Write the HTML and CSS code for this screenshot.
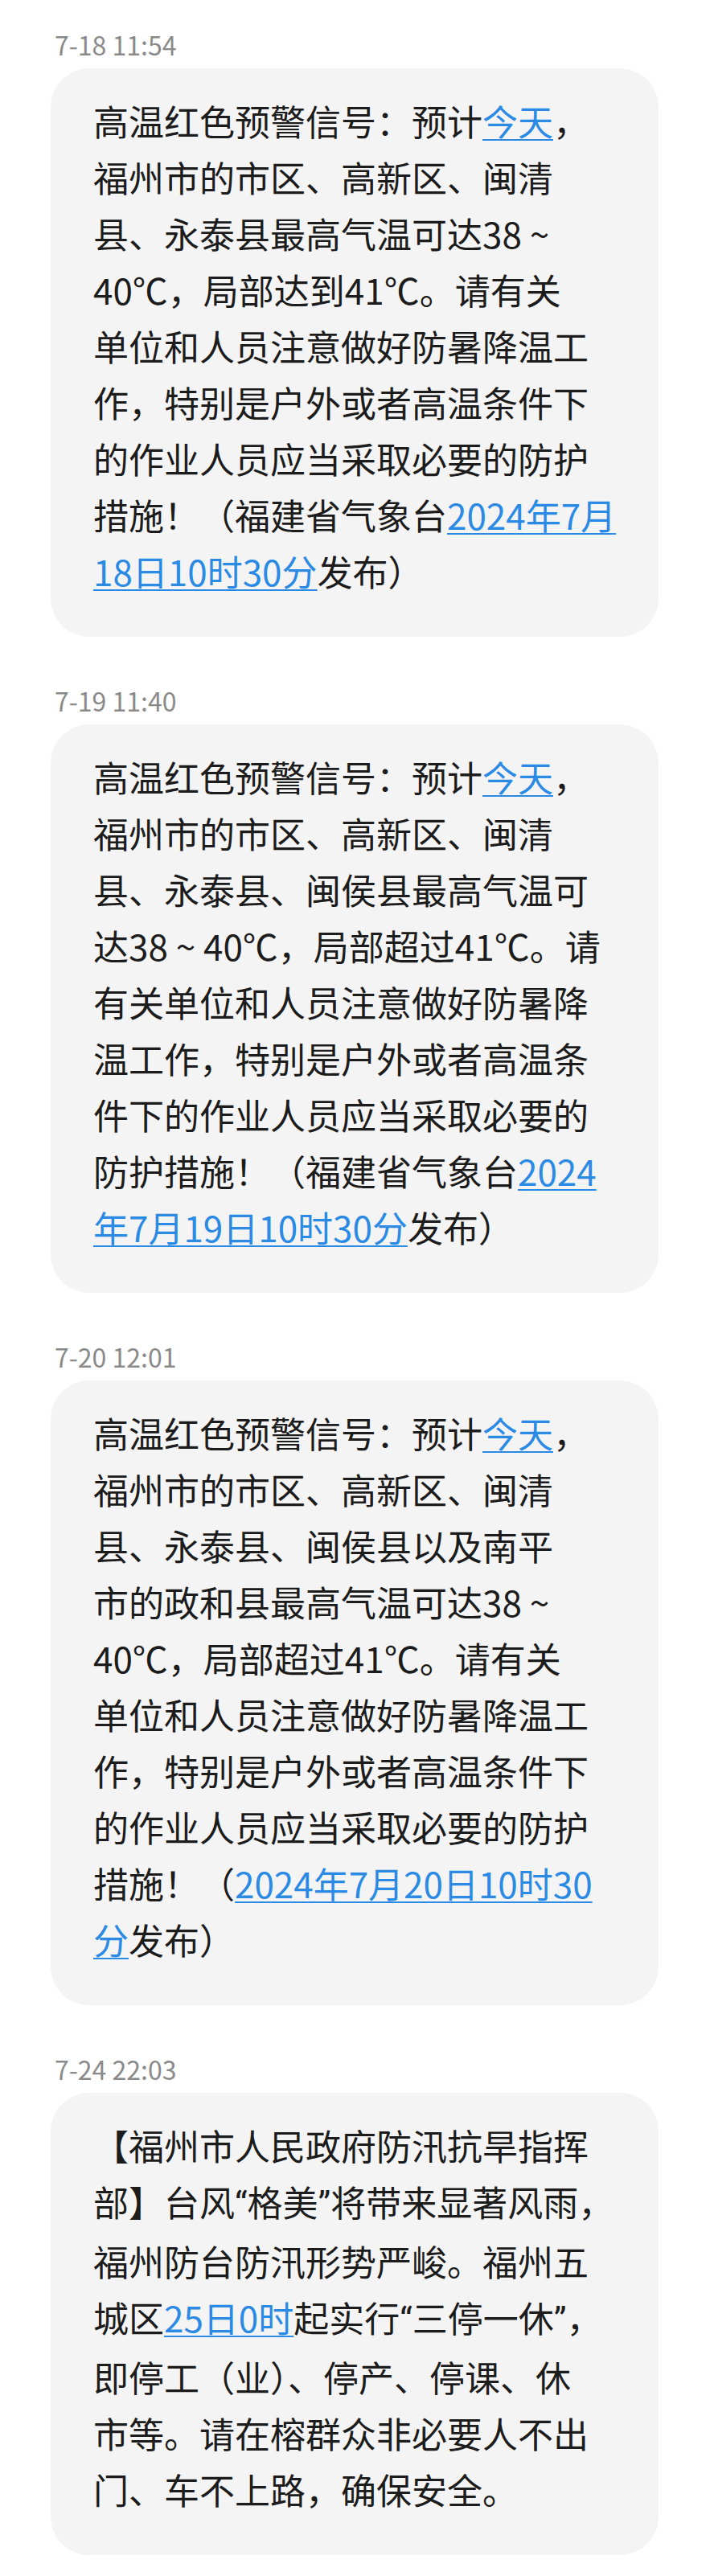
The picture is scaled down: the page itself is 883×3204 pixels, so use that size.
FILE: index.html
```html
<!DOCTYPE html>
<html lang="zh-CN">
<head>
<meta charset="utf-8">
<title>短信</title>
<link rel="stylesheet" href="styles.css">
</head>
<body>
<main class="thread">
  <section class="msg">
    <div class="time">7-18 11:54</div>
    <div class="bubble">
      <p class="text">高温红色预警信号：预计<a class="link">今天</a>，<br>福州市的市区、高新区、闽清<br>县、永泰县最高气温可达38 ~<br>40℃，局部达到41℃。请有关<br>单位和人员注意做好防暑降温工<br>作，特别是户外或者高温条件下<br>的作业人员应当采取必要的防护<br>措施！（福建省气象台<a class="link">2024年7月<br>18日10时30分</a>发布）</p>
    </div>
  </section>
  <section class="msg">
    <div class="time">7-19 11:40</div>
    <div class="bubble">
      <p class="text">高温红色预警信号：预计<a class="link">今天</a>，<br>福州市的市区、高新区、闽清<br>县、永泰县、闽侯县最高气温可<br>达38 ~ 40℃，局部超过41℃。请<br>有关单位和人员注意做好防暑降<br>温工作，特别是户外或者高温条<br>件下的作业人员应当采取必要的<br>防护措施！（福建省气象台<a class="link">2024<br>年7月19日10时30分</a>发布）</p>
    </div>
  </section>
  <section class="msg">
    <div class="time">7-20 12:01</div>
    <div class="bubble">
      <p class="text">高温红色预警信号：预计<a class="link">今天</a>，<br>福州市的市区、高新区、闽清<br>县、永泰县、闽侯县以及南平<br>市的政和县最高气温可达38 ~<br>40℃，局部超过41℃。请有关<br>单位和人员注意做好防暑降温工<br>作，特别是户外或者高温条件下<br>的作业人员应当采取必要的防护<br>措施！（<a class="link">2024年7月20日10时30<br>分</a>发布）</p>
    </div>
  </section>
  <section class="msg">
    <div class="time">7-24 22:03</div>
    <div class="bubble">
      <p class="text">【福州市人民政府防汛抗旱指挥<br>部】台风<span class="q">“</span>格美<span class="q">”</span>将带来显著风雨，<br>福州防台防汛形势严峻。福州五<br>城区<a class="link">25日0时</a>起实行<span class="q">“</span>三停一休<span class="q">”</span>，<br>即停工（业）、停产、停课、休<br>市等。请在榕群众非必要人不出<br>门、车不上路，确保安全。</p>
    </div>
  </section>
</main>
</body>
</html>
```

FILE: styles.css
```css
html, body {
  margin: 0;
  padding: 0;
  background: #ffffff;
}

body {
  font-family: "Noto Sans CJK SC", "Noto Sans", sans-serif;
  color: #1c1c1c;
}

.thread {
  display: flex;
  flex-direction: column;
  gap: 59px;
  padding: 35px 64px 33px 63px;
}

.msg {
  display: flex;
  flex-direction: column;
}

.time {
  font-size: 32px;
  line-height: 40px;
  color: #8a8a8a;
  padding-left: 5px;
  margin-bottom: 10px;
}

.bubble {
  background: #f4f4f4;
  border-radius: 48px;
  padding: 30px 40px 47px 53px;
}

.text {
  margin: 0;
  font-size: 44px;
  line-height: 70px;
  white-space: nowrap;
}

.link {
  color: #2a8ae4;
  text-decoration: underline;
  text-decoration-thickness: 2px;
  text-underline-offset: 4px;
}

.q {
  font-family: "Roboto", sans-serif;
}
```
